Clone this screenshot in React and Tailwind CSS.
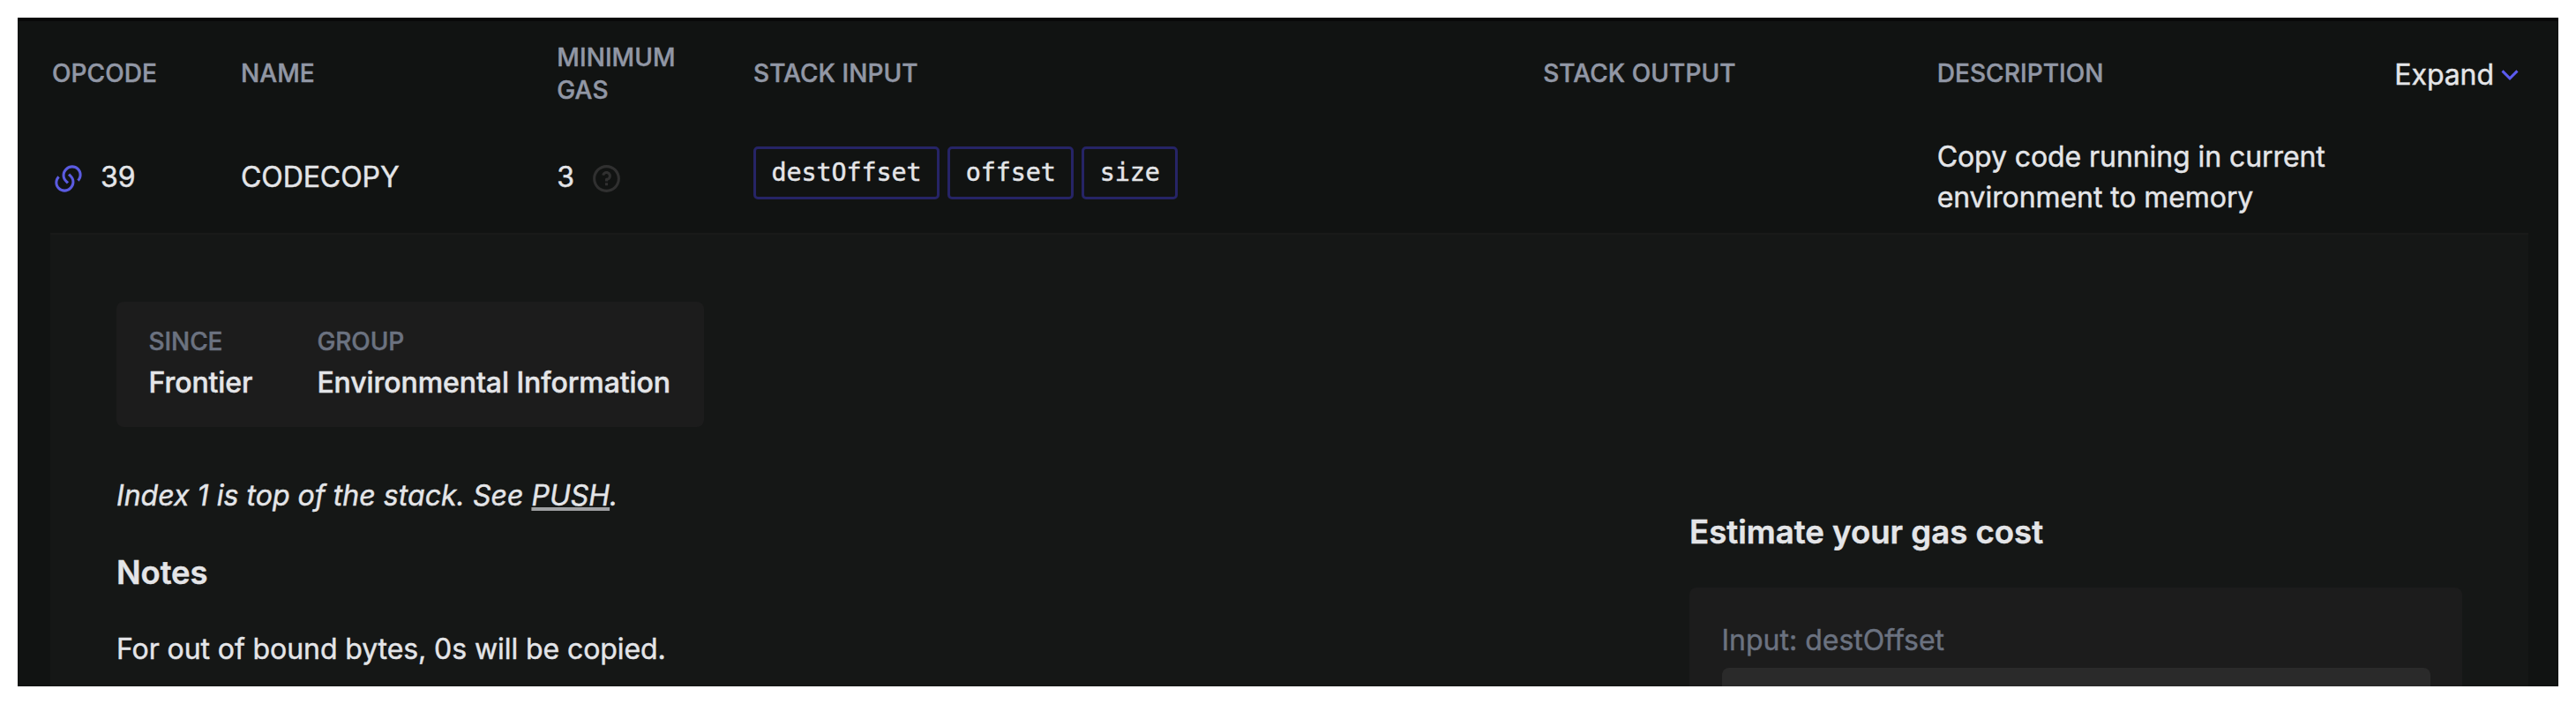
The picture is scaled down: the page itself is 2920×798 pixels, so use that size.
import { RiLinksLine, RiQuestionLine, RiArrowDownSLine } from "react-icons/ri";

const GRID =
  "grid grid-cols-[214px_358.3px_222.7px_895.2px_446.5px_518.7px_1fr] items-center pl-[39px]";

function Chip({ children }) {
  return (
    <span className="flex h-[60px] items-center rounded-[5px] border-[3px] border-[#262466] px-[17.5px] font-['DejaVu_Sans_Mono',monospace] text-[28.4px]">
      {children}
    </span>
  );
}

function Field({ label, value }) {
  return (
    <div>
      <dt className="text-[28px] leading-[37px] font-medium text-[#6b7280] uppercase">{label}</dt>
      <dd className="mt-[5px] leading-[46px] font-medium">{value}</dd>
    </div>
  );
}

export default function App() {
  return (
    <div className="h-[798px] w-[2920px] bg-white p-5 font-[Inter,sans-serif] text-[32px] leading-[46px] tracking-[-0.08px] text-[#e4e5e8] [-webkit-text-stroke:0.45px_currentColor]">
      <main className="h-[758px] overflow-hidden bg-[#111312] shadow-[inset_0_4px_0_#080808]">
        <header className={`${GRID} h-[127px]`}>
          <div className="contents text-[28px] leading-[37px] font-medium tracking-[0.08px] text-[#9197a5] uppercase">
            <div>Opcode</div>
            <div>Name</div>
            <div className="w-[160px]">Minimum Gas</div>
            <div>Stack Input</div>
            <div>Stack Output</div>
            <div>Description</div>
          </div>
          <button className="flex items-center pt-0.5">
            Expand
            <RiArrowDownSLine className="size-9 stroke-0 text-[#5b5bf0]" />
          </button>
        </header>

        <section className={`${GRID} h-[117px] pb-[9px]`}>
          <div className="flex items-center gap-[18px]">
            <RiLinksLine className="mt-[3px] size-[37px] text-[#5b5be0]" />
            39
          </div>
          <div>CODECOPY</div>
          <div className="flex items-center gap-[18px]">
            3
            <RiQuestionLine className="mt-[3px] size-[37px] text-[#303030]" />
          </div>
          <div className="mb-2.5 flex gap-[9px]">
            <Chip>destOffset</Chip>
            <Chip>offset</Chip>
            <Chip>size</Chip>
          </div>
          <div />
          <p className="w-[480px]">Copy code running in current environment to memory</p>
        </section>

        <section className="mr-[34px] ml-[37px] flex h-[520px] justify-between border-t-2 border-[#191a19] bg-[#151716] px-[75px]">
          <div className="pt-[76px]">
            <dl className="flex h-[142px] w-[666px] gap-[73px] rounded-lg bg-[#1c1c1c] px-[36.5px] pt-[27px] tracking-[-0.08px]">
              <Field label="Since" value="Frontier" />
              <Field label="Group" value="Environmental Information" />
            </dl>
            <p className="mt-[55px] tracking-[0.04px] italic">
              Index 1 is top of the stack. See{" "}
              <a className="underline decoration-[#a0a1a3] decoration-[4px] underline-offset-[2px] [text-decoration-skip-ink:none]">
                PUSH
              </a>
              .
            </p>
            <h2 className="mt-[41px] text-[36.4px] leading-[46px] font-semibold">Notes</h2>
            <p className="mt-[41px]">For out of bound bytes, 0s will be copied.</p>
          </div>

          <div className="w-[876px] pt-[314px]">
            <h2 className="text-[36.6px] leading-[46px] font-semibold tracking-normal">Estimate your gas cost</h2>
            <div className="mt-10 h-[200px] rounded-lg bg-[#1c1c1c] px-[36.5px] pt-[37px]">
              <label className="block tracking-normal text-[#6b7280]">Input: destOffset</label>
              <div className="mt-2 h-[80px] rounded-lg bg-[#2a2a2a]" />
            </div>
          </div>
        </section>
      </main>
    </div>
  );
}
